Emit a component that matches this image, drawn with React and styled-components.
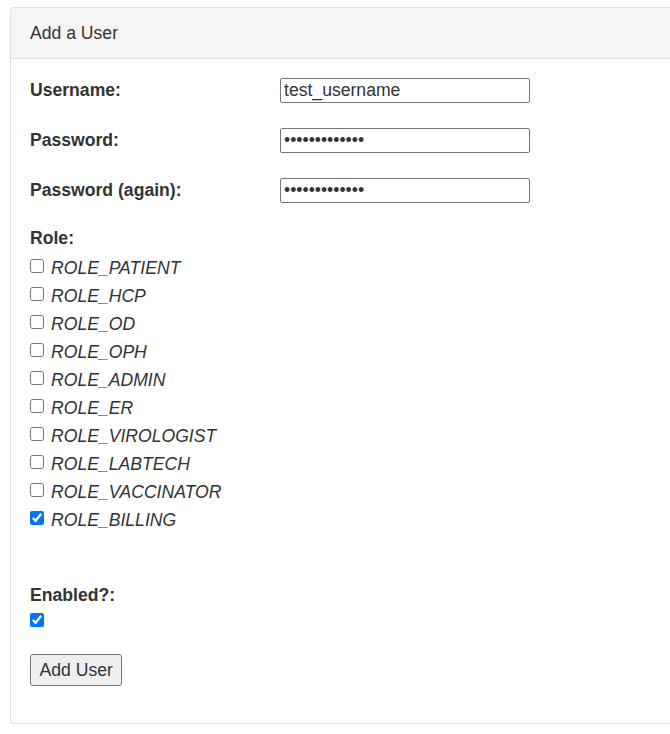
import styled, { createGlobalStyle } from 'styled-components';

const GlobalStyle = createGlobalStyle`
  html, body {
    margin: 0;
    padding: 0;
    background: #fff;
  }
  body {
    font-family: "Liberation Sans", Arial, Helvetica, sans-serif;
    font-size: 17.6px;
    color: #333;
  }
`;

const Page = styled.div`
  padding: 7px 0 0 10px;
  width: 700px;
`;

const Panel = styled.div`
  border: 1px solid #ddd;
  border-radius: 4px;
  background: #fff;
  box-shadow: 0 1px 1px rgba(0, 0, 0, 0.05);
`;

const PanelHeading = styled.div`
  background: #f5f5f5;
  border-bottom: 1px solid #ddd;
  border-radius: 3px 3px 0 0;
  height: 50px;
  display: flex;
  align-items: center;
  padding: 0 19px;
  font-size: 17.6px;
`;

const PanelBody = styled.form`
  padding: 19px 19px 37px;
`;

const FieldRow = styled.div`
  display: grid;
  grid-template-columns: 250px 250px;
  align-items: center;
  height: 24px;
  margin-bottom: 26px;
`;

const Label = styled.label`
  font-weight: bold;
  display: block;
`;

const TextInput = styled.input`
  box-sizing: border-box;
  width: 250px;
  height: 25px;
  margin: 0;
  padding: 1px 3px;
  border: 1px solid #767676;
  border-radius: 2px;
  font-family: "Liberation Sans", Arial, sans-serif;
  font-size: 17.6px;
  color: #333;
  outline: none;
`;

const Section = styled.div`
  margin-top: ${p => p.$top || 0}px;
`;

const SectionLabel = styled(Label)`
  height: 24px;
  line-height: 24px;
  margin-bottom: 4px;
`;

const CheckList = styled.div`
  display: flex;
  flex-direction: column;
`;

const CheckRow = styled.label`
  display: flex;
  align-items: center;
  gap: 7px;
  height: 28px;
  font-style: italic;
`;

const Check = styled.input`
  width: 14px;
  height: 14px;
  margin: 0 0 4px 0;
`;

const SubmitButton = styled.button`
  margin-top: 22px;
  height: 32px;
  padding: 0 8.5px;
  font-family: "Liberation Sans", Arial, sans-serif;
  font-size: 17.6px;
  color: #333;
  background: #efefef;
  border: 1px solid #767676;
  border-radius: 3px;
`;

const roles = [
  'ROLE_PATIENT',
  'ROLE_HCP',
  'ROLE_OD',
  'ROLE_OPH',
  'ROLE_ADMIN',
  'ROLE_ER',
  'ROLE_VIROLOGIST',
  'ROLE_LABTECH',
  'ROLE_VACCINATOR',
  'ROLE_BILLING',
];

export default function App() {
  return (
    <Page>
      <GlobalStyle />
      <Panel>
        <PanelHeading>Add a User</PanelHeading>
        <PanelBody onSubmit={e => e.preventDefault()}>
          <FieldRow>
            <Label>Username:</Label>
            <TextInput type="text" defaultValue="test_username" />
          </FieldRow>
          <FieldRow>
            <Label>Password:</Label>
            <TextInput type="password" defaultValue="1234567890123" />
          </FieldRow>
          <FieldRow>
            <Label>Password (again):</Label>
            <TextInput type="password" defaultValue="1234567890123" />
          </FieldRow>

          <Section $top={-2}>
            <SectionLabel>Role:</SectionLabel>
            <CheckList>
              {roles.map(r => (
                <CheckRow key={r}>
                  <Check type="checkbox" defaultChecked={r === 'ROLE_BILLING'} />
                  {r}
                </CheckRow>
              ))}
            </CheckList>
          </Section>

          <Section $top={49}>
            <SectionLabel>Enabled?:</SectionLabel>
            <Check type="checkbox" defaultChecked />
          </Section>

          <SubmitButton type="submit">Add User</SubmitButton>
        </PanelBody>
      </Panel>
    </Page>
  );
}
